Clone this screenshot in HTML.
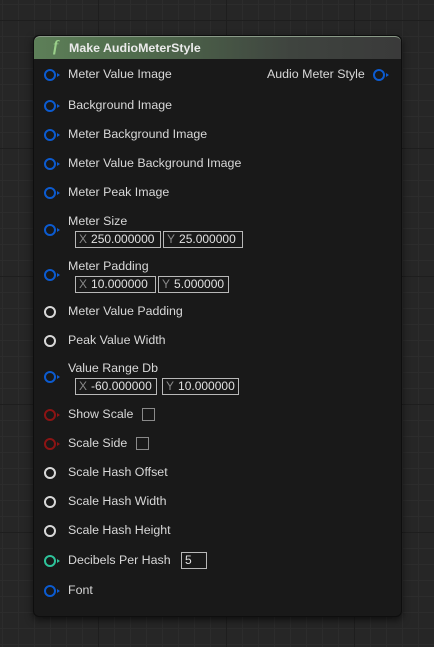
<html><head><style>
body{margin:0;width:434px;height:647px;overflow:hidden;background-color:#262626;
background-image:linear-gradient(#1e1e1e 1px,transparent 1px),linear-gradient(90deg,#1e1e1e 1px,transparent 1px),linear-gradient(#2c2c2c 1px,transparent 1px),linear-gradient(90deg,#2c2c2c 1px,transparent 1px);
background-size:128px 128px,128px 128px,16px 16px,16px 16px;background-position:-30px 20px,-30px 20px,-30px 4px,-30px 4px;
font-family:"Liberation Sans",sans-serif;font-size:12.4px;color:#d8d8d8;position:relative}
.node{position:absolute;left:33px;top:35px;width:367px;height:580px;background:#191919;border-radius:6px;box-shadow:0 3px 8px rgba(0,0,0,.6);border:1px solid #0e0e0e}
.hdr{position:absolute;left:0;top:0;width:367px;height:22px;border-radius:6px 6px 0 0;background:linear-gradient(90deg,#5d7f58,#4f6a4c 30%,#3f443f 70%,#3a3a3a);border-top:1px solid #8a9a88}
.hdr b{position:absolute;left:35px;top:4px;font-size:12.4px;color:#eaeaea}
.hdr i{position:absolute;left:19px;top:1px;font-family:"Liberation Serif",serif;font-size:16px;color:#9ad08a;font-weight:bold}
.t{position:absolute;left:68px;white-space:nowrap;line-height:14px}
.p{position:absolute;left:44px;width:8px;height:8px;border:2px solid #0c5bd0;border-radius:50%}
.p.a::after{content:"";position:absolute;left:11px;top:1.5px;border-left:3px solid currentColor;border-top:2.5px solid transparent;border-bottom:2.5px solid transparent}
.p.b{color:#0c5bd0}.w{border-color:#d8d8d8}.r{border-color:#8c1414;color:#8c1414}.g{border-color:#2ec39a;color:#2ec39a}
.bx{position:absolute;height:15px;border:1px solid #b8b8b8;line-height:15px;padding-left:3px;color:#e0e0e0;white-space:nowrap;font-size:12px}
.bx span{color:#8a8a8a;margin-right:4px}
.cb{position:absolute;width:11px;height:11px;border:1px solid #8a8a8a}
</style></head><body>
<div class="node"><div class="hdr"><i>f</i><b>Make AudioMeterStyle</b></div></div>

<div class="p a b" style="top:69px"></div><div class="t" style="top:67px">Meter Value Image</div>
<div class="t" style="left:267px;top:67px">Audio Meter Style</div><div class="p a b" style="left:373px;top:69px"></div>
<div class="p a b" style="top:100px"></div><div class="t" style="top:98px">Background Image</div>
<div class="p a b" style="top:129px"></div><div class="t" style="top:127px">Meter Background Image</div>
<div class="p a b" style="top:158px"></div><div class="t" style="top:156px">Meter Value Background Image</div>
<div class="p a b" style="top:187px"></div><div class="t" style="top:185px">Meter Peak Image</div>
<div class="p a b" style="top:224px"></div><div class="t" style="top:214px">Meter Size</div>
<div class="bx" style="left:75px;top:231px;width:81px"><span>X</span>250.000000</div>
<div class="bx" style="left:163px;top:231px;width:75px"><span>Y</span>25.000000</div>
<div class="p a b" style="top:269px"></div><div class="t" style="top:259px">Meter Padding</div>
<div class="bx" style="left:75px;top:276px;width:76px"><span>X</span>10.000000</div>
<div class="bx" style="left:158px;top:276px;width:66px"><span>Y</span>5.000000</div>
<div class="p w" style="top:306px"></div><div class="t" style="top:304px">Meter Value Padding</div>
<div class="p w" style="top:335px"></div><div class="t" style="top:333px">Peak Value Width</div>
<div class="p a b" style="top:371px"></div><div class="t" style="top:361px">Value Range Db</div>
<div class="bx" style="left:75px;top:378px;width:77px"><span>X</span>-60.000000</div>
<div class="bx" style="left:162px;top:378px;width:72px"><span>Y</span>10.000000</div>
<div class="p a r" style="top:409px"></div><div class="t" style="top:407px">Show Scale</div><div class="cb" style="left:142px;top:408px"></div>
<div class="p a r" style="top:438px"></div><div class="t" style="top:436px">Scale Side</div><div class="cb" style="left:136px;top:437px"></div>
<div class="p w" style="top:467px"></div><div class="t" style="top:465px">Scale Hash Offset</div>
<div class="p w" style="top:496px"></div><div class="t" style="top:494px">Scale Hash Width</div>
<div class="p w" style="top:525px"></div><div class="t" style="top:523px">Scale Hash Height</div>
<div class="p a g" style="top:555px"></div><div class="t" style="top:553px">Decibels Per Hash</div>
<div class="bx" style="left:181px;top:552px;width:21px">5</div>
<div class="p a b" style="top:585px"></div><div class="t" style="top:583px">Font</div>
</body></html>
